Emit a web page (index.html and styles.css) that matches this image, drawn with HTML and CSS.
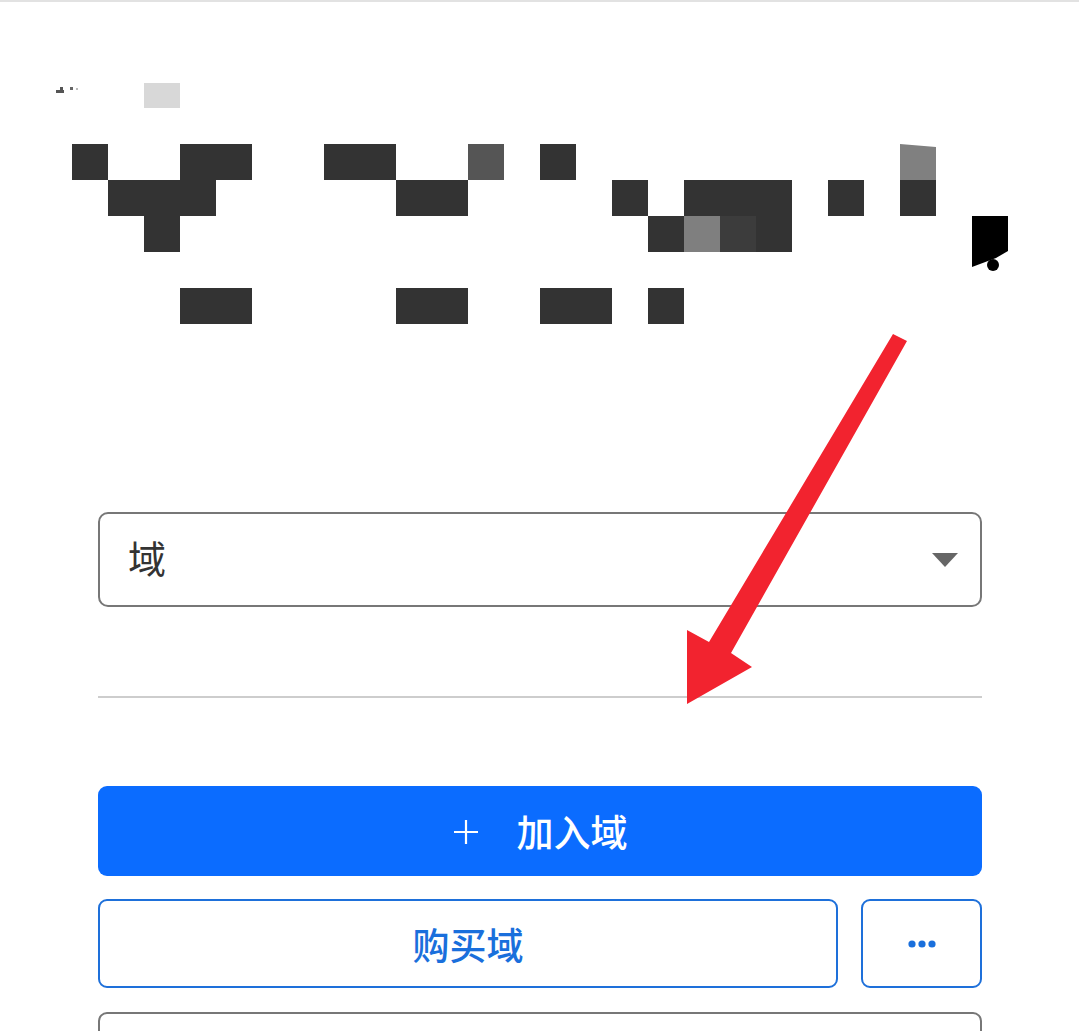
FILE: index.html
```html
<!DOCTYPE html>
<html lang="zh-CN">
<head>
  <meta charset="UTF-8">
  <title>域</title>
  <link rel="stylesheet" href="styles.css">
</head>
<body>
  <div class="page">
    <div class="topline"></div>

    <div class="hero">
      <!-- blurred account name -->
      <svg class="mosaic" width="1079" height="340" viewBox="0 2 1079 340">
        <rect x="56" y="90" width="8" height="3" fill="#555"/>
        <rect x="60" y="87" width="3" height="5" fill="#555"/>
        <rect x="70" y="87" width="3" height="3" fill="#666"/>
        <rect x="76" y="88" width="2" height="2" fill="#bbb"/>
        <rect x="144" y="83" width="36" height="25" fill="#d8d8d8"/>

        <g fill="#333">
          <rect x="72" y="144" width="36" height="36"/>
          <rect x="180" y="144" width="72" height="36"/>
          <rect x="324" y="144" width="72" height="36"/>
          <rect x="540" y="144" width="36" height="36"/>

          <rect x="108" y="180" width="108" height="36"/>
          <rect x="396" y="180" width="72" height="36"/>
          <rect x="612" y="180" width="36" height="36"/>
          <rect x="684" y="180" width="108" height="36"/>
          <rect x="828" y="180" width="36" height="36"/>
          <rect x="900" y="180" width="36" height="36"/>

          <rect x="144" y="216" width="36" height="36"/>
          <rect x="648" y="216" width="36" height="36"/>
          <rect x="756" y="216" width="36" height="36"/>

          <rect x="180" y="288" width="72" height="36"/>
          <rect x="396" y="288" width="72" height="36"/>
          <rect x="540" y="288" width="72" height="36"/>
          <rect x="648" y="288" width="36" height="36"/>
        </g>
        <rect x="468" y="144" width="36" height="36" fill="#555"/>
        <polygon points="900,144 936,147 936,180 900,180" fill="#808080"/>
        <rect x="684" y="216" width="36" height="36" fill="#7f7f7f"/>
        <rect x="720" y="216" width="36" height="36" fill="#3c3c3c"/>

        <polygon points="972,216 1008,216 1008,251 996,258 972,267" fill="#000"/>
        <circle cx="993" cy="265" r="6" fill="#000"/>
      </svg>
    </div>

    <div class="content">
      <div class="select">
        <span class="select-value">域</span>
        <svg class="caret" width="26" height="14" viewBox="0 0 26 14">
          <polygon points="0,0 26,0 13,14" fill="#666"/>
        </svg>
      </div>

      <div class="divider"></div>

      <div class="actions">
        <button class="btn btn-primary">
          <svg class="plus" width="26" height="26" viewBox="0 0 26 26">
            <path d="M13 1v24M1 13h24" stroke="#fff" stroke-width="2.2" fill="none"/>
          </svg>
          <span>加入域</span>
        </button>

        <div class="btn-row">
          <button class="btn btn-outline">购买域</button>
          <button class="btn btn-outline btn-more">
            <svg width="28" height="8" viewBox="0 0 28 8">
              <circle cx="4" cy="4" r="3.6" fill="#1a6fdc"/>
              <circle cx="14" cy="4" r="3.6" fill="#1a6fdc"/>
              <circle cx="24" cy="4" r="3.6" fill="#1a6fdc"/>
            </svg>
          </button>
        </div>

        <button class="btn btn-gray"></button>
      </div>
    </div>

    <!-- annotation arrow -->
    <svg class="arrow" width="1079" height="1031" viewBox="0 0 1079 1031">
      <polygon points="893,334 907,341 731,653 752,667 687,704 687,630 709,642" fill="#f2232f"/>
    </svg>
  </div>
</body>
</html>
```

FILE: styles.css
```css
* {
  box-sizing: border-box;
}

body {
  margin: 0;
  background-color: #fff;
  font-family: "Noto Sans CJK SC", "Noto Sans", sans-serif;
  overflow: hidden;
}

.page {
  position: relative;
  width: 1079px;
  height: 1031px;
  overflow: hidden;
}

.topline {
  height: 2px;
  background-color: #e2e2e2;
}

.mosaic {
  display: block;
}

.content {
  padding: 170px 97px 0 98px;
}

.select {
  height: 95px;
  border: 2px solid #777;
  border-radius: 10px;
  display: flex;
  align-items: center;
  justify-content: space-between;
  padding: 0 22px 6px 28px;
}

.select-value {
  font-size: 38px;
  color: #333;
  line-height: 1;
}

.caret {
  display: block;
  margin-top: 6px;
}

.divider {
  margin-top: 89px;
  height: 2px;
  background-color: #cdcdcd;
}

.actions {
  margin-top: 88px;
  display: flex;
  flex-direction: column;
  gap: 23px;
}

.btn {
  height: 90px;
  border-radius: 9px;
  font-family: inherit;
  font-size: 37px;
  font-weight: 500;
  display: flex;
  align-items: center;
  justify-content: center;
  padding: 0;
  cursor: pointer;
}

.btn-primary {
  background-color: #0b6cff;
  border: none;
  color: #fff;
  gap: 38px;
}

.plus {
  display: block;
  margin-top: 2px;
}

.btn-row {
  display: grid;
  grid-template-columns: 1fr 121px;
  gap: 23px;
}

.btn-outline {
  height: 89px;
  background-color: #fff;
  border: 2px solid #1e70da;
  color: #1a6fdc;
}

.btn-gray {
  margin-top: 1px;
  background-color: #fff;
  border: 2px solid #777;
}

.arrow {
  position: absolute;
  top: 0;
  left: 0;
  pointer-events: none;
}
```
